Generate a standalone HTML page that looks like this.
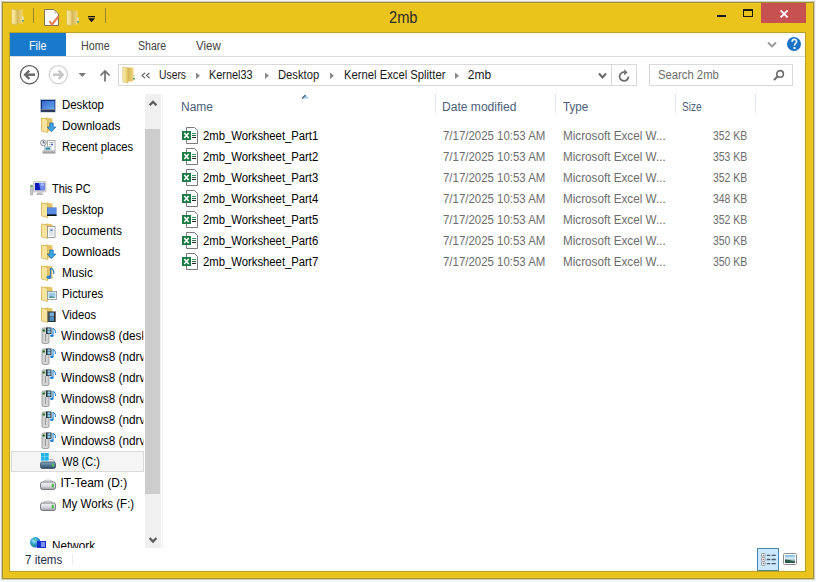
<!DOCTYPE html>
<html><head><meta charset="utf-8"><style>
html,body{margin:0;padding:0;}
body{width:816px;height:582px;overflow:hidden;position:relative;background:#F5F7FB;font-family:"Liberation Sans", sans-serif;}
.b{position:absolute;}
.t{position:absolute;white-space:nowrap;}
</style></head><body>
<div class="b" style="left:2px;top:2px;width:810px;height:575px;border:1px solid #A08F2E;background:#EBC41B;box-shadow:0 0 0 1px rgba(140,130,80,0.35), inset 0 0 0 1px #EEC92C;"></div>
<div class="b" style="left:9px;top:32px;width:795px;height:538px;border:1px solid #BAA12E;background:#fff;box-shadow:inset 1px 1px 0 #FFFFE4, inset -1px -1px 0 #FFFFE4;"></div>
<div class="b" style="left:10px;top:33px;width:795px;height:3px;background:linear-gradient(#FDFBE0,#fff);"></div>
<svg class="b" style="left:11px;top:8px;" width="15" height="18" viewBox="0 0 15 18">
<defs><linearGradient id="fgl11" x1="0" x2="1"><stop offset="0" stop-color="#FFF3B4"/><stop offset="1" stop-color="#E4C664"/></linearGradient>
<linearGradient id="fgr11" x1="0" x2="1"><stop offset="0" stop-color="#CFB04C"/><stop offset="1" stop-color="#F0D680"/></linearGradient></defs>
<path d="M5 1.5 L11.5 1.5 V15.5 L5 15.5 Z" fill="url(#fgr11)"/>
<path d="M0.8 1 L6 2.2 V17 L0.8 15.8 Z" fill="url(#fgl11)" stroke="#D0B560" stroke-width="0.6"/>
<rect x="11" y="8.5" width="1.8" height="5" fill="#E8E0B0"/><rect x="11" y="12" width="1.8" height="1.6" fill="#5a9a70"/>
</svg>
<div class="b" style="left:33px;top:8px;width:1px;height:15px;background:#9a8530;"></div>
<svg class="b" style="left:44px;top:9px;" width="16" height="17" viewBox="0 0 16 17">
<path d="M0.5 0.5 H10 L14.5 5 V16.5 H0.5 Z" fill="#fdfdfd" stroke="#7c7550" stroke-width="1"/>
<circle cx="11.3" cy="3.3" r="1.2" fill="#ccc"/>
<path d="M5.5 12.2 L8 15.5 L14.5 7.5" fill="none" stroke="#E47B55" stroke-width="2"/>
</svg>
<svg class="b" style="left:66px;top:9px;" width="15" height="18" viewBox="0 0 15 18">
<defs><linearGradient id="fgl66" x1="0" x2="1"><stop offset="0" stop-color="#FFF3B4"/><stop offset="1" stop-color="#E4C664"/></linearGradient>
<linearGradient id="fgr66" x1="0" x2="1"><stop offset="0" stop-color="#CFB04C"/><stop offset="1" stop-color="#F0D680"/></linearGradient></defs>
<path d="M5 1.5 L11.5 1.5 V15.5 L5 15.5 Z" fill="url(#fgr66)"/>
<path d="M0.8 1 L6 2.2 V17 L0.8 15.8 Z" fill="url(#fgl66)" stroke="#D0B560" stroke-width="0.6"/>
<rect x="11" y="8.5" width="1.8" height="5" fill="#E8E0B0"/><rect x="11" y="12" width="1.8" height="1.6" fill="#5a9a70"/>
</svg>
<svg class="b" style="left:87px;top:14px;" width="9" height="9" viewBox="0 0 9 9"><rect x="1" y="2" width="7" height="1.3" fill="#111"/><path d="M1 4.3 H8 L4.5 8.3 Z" fill="#111"/></svg>
<div class="b" style="left:105px;top:8px;width:1px;height:15px;background:#9a8530;"></div>
<div class="t" style="left:389.40px;top:8.46px;font-size:16px;line-height:20px;color:#2b2b2b;transform:scaleX(0.9159);transform-origin:0 0;">2mb</div>
<div class="b" style="left:717px;top:14.7px;width:8.5px;height:2.6px;background:#1a1a1a;"></div>
<div class="b" style="left:743px;top:9px;width:10px;height:8px;border:1px solid #1a1a1a;border-top-width:2px;box-sizing:border-box;"></div>
<div class="b" style="left:761px;top:3px;width:45px;height:20px;background:#C75050;"></div>
<svg class="b" style="left:779px;top:9px;" width="11" height="10" viewBox="0 0 11 10"><path d="M1.6 1.3 L8.6 8.3 M8.6 1.3 L1.6 8.3" stroke="#fff" stroke-width="1.9"/></svg>
<div class="b" style="left:10px;top:33px;width:56px;height:23px;background:#1979CA;"></div>
<div class="t" style="left:29.30px;top:38.24px;font-size:12px;line-height:16px;color:#fff;transform:scaleX(0.9002);transform-origin:0 0;">File</div>
<div class="t" style="left:80.60px;top:38.24px;font-size:12px;line-height:16px;color:#444;transform:scaleX(0.8937);transform-origin:0 0;">Home</div>
<div class="t" style="left:138.20px;top:38.24px;font-size:12px;line-height:16px;color:#444;transform:scaleX(0.8811);transform-origin:0 0;">Share</div>
<div class="t" style="left:196.20px;top:38.24px;font-size:12px;line-height:16px;color:#444;transform:scaleX(0.9607);transform-origin:0 0;">View</div>
<div class="b" style="left:10px;top:56px;width:795px;height:1px;background:#DADBDC;"></div>
<svg class="b" style="left:767px;top:41px;" width="10" height="8" viewBox="0 0 10 8"><path d="M1 1.5 L5 5.5 L9 1.5" fill="none" stroke="#9a9a9a" stroke-width="1.9"/></svg>
<svg class="b" style="left:786px;top:36px;" width="16" height="16" viewBox="0 0 16 16"><circle cx="8" cy="8" r="7" fill="#1C72C6"/><path d="M6 5.9 Q6.1 3.4 8.4 3.4 Q10.6 3.4 10.6 5.6 Q10.6 6.9 9.4 7.7 Q8.5 8.3 8.5 9.8" fill="none" stroke="#E4F6FF" stroke-width="1.6"/><rect x="7.5" y="11" width="2" height="2" fill="#E4F6FF"/></svg>
<svg class="b" style="left:19px;top:64px;" width="22" height="22" viewBox="0 0 22 22"><circle cx="10.5" cy="10.7" r="9.1" fill="none" stroke="#5e5e5e" stroke-width="1.25"/><path d="M6.5 10.7 H16" fill="none" stroke="#6a6a6a" stroke-width="2.5"/><path d="M10.3 6.6 L6 10.7 L10.3 14.8" fill="none" stroke="#6a6a6a" stroke-width="2.3"/></svg>
<svg class="b" style="left:48px;top:64px;" width="22" height="22" viewBox="0 0 22 22"><circle cx="10.3" cy="10.7" r="9.1" fill="none" stroke="#d2d2d2" stroke-width="1.25"/><path d="M5 10.7 H14.5" fill="none" stroke="#c6c6c6" stroke-width="2.5"/><path d="M10.5 6.6 L14.8 10.7 L10.5 14.8" fill="none" stroke="#c6c6c6" stroke-width="2.3"/></svg>
<svg class="b" style="left:78px;top:72px;" width="9" height="6" viewBox="0 0 9 6"><path d="M0.5 1 H8 L4.25 5 Z" fill="#7a7a7a"/></svg>
<svg class="b" style="left:99px;top:69px;" width="12" height="13" viewBox="0 0 12 13"><path d="M6 2 V12.5 M1.5 6.5 L6 2 L10.5 6.5" fill="none" stroke="#6e6e6e" stroke-width="1.7"/></svg>
<div class="b" style="left:118px;top:64px;width:519px;height:22px;border:1px solid #D9D9D9;box-sizing:border-box;"></div>
<div class="b" style="left:611px;top:64px;width:1px;height:22px;background:#D9D9D9;"></div>
<svg class="b" style="left:122px;top:66px;" width="15" height="18" viewBox="0 0 15 18">
<defs><linearGradient id="fgl122" x1="0" x2="1"><stop offset="0" stop-color="#FFF3B4"/><stop offset="1" stop-color="#E4C664"/></linearGradient>
<linearGradient id="fgr122" x1="0" x2="1"><stop offset="0" stop-color="#CFB04C"/><stop offset="1" stop-color="#F0D680"/></linearGradient></defs>
<path d="M5 1.5 L11.5 1.5 V15.5 L5 15.5 Z" fill="url(#fgr122)"/>
<path d="M0.8 1 L6 2.2 V17 L0.8 15.8 Z" fill="url(#fgl122)" stroke="#D0B560" stroke-width="0.6"/>
<rect x="11" y="8.5" width="1.8" height="5" fill="#E8E0B0"/><rect x="11" y="12" width="1.8" height="1.6" fill="#5a9a70"/>
</svg>
<svg class="b" style="left:141px;top:72px;" width="10" height="7" viewBox="0 0 10 7"><path d="M4 0.8 L1 3.5 L4 6.2 M8.5 0.8 L5.5 3.5 L8.5 6.2" fill="none" stroke="#555" stroke-width="1.1"/></svg>
<div class="t" style="left:158.60px;top:66.64px;font-size:12px;line-height:16px;color:#1a1a1a;transform:scaleX(0.8616);transform-origin:0 0;">Users</div>
<svg class="b" style="left:195px;top:72px;" width="6" height="8" viewBox="0 0 6 8"><path d="M1 0.5 L5 3.75 L1 7 Z" fill="#8a8a8a"/></svg>
<div class="t" style="left:209.40px;top:66.64px;font-size:12px;line-height:16px;color:#1a1a1a;transform:scaleX(0.9078);transform-origin:0 0;">Kernel33</div>
<svg class="b" style="left:264px;top:72px;" width="6" height="8" viewBox="0 0 6 8"><path d="M1 0.5 L5 3.75 L1 7 Z" fill="#8a8a8a"/></svg>
<div class="t" style="left:277.50px;top:66.64px;font-size:12px;line-height:16px;color:#1a1a1a;transform:scaleX(0.9358);transform-origin:0 0;">Desktop</div>
<svg class="b" style="left:329px;top:72px;" width="6" height="8" viewBox="0 0 6 8"><path d="M1 0.5 L5 3.75 L1 7 Z" fill="#8a8a8a"/></svg>
<div class="t" style="left:343.50px;top:66.64px;font-size:12px;line-height:16px;color:#1a1a1a;transform:scaleX(0.9384);transform-origin:0 0;">Kernel Excel Splitter</div>
<svg class="b" style="left:454px;top:72px;" width="6" height="8" viewBox="0 0 6 8"><path d="M1 0.5 L5 3.75 L1 7 Z" fill="#8a8a8a"/></svg>
<div class="t" style="left:467.80px;top:66.64px;font-size:12px;line-height:16px;color:#1a1a1a;">2mb</div>
<svg class="b" style="left:597px;top:72px;" width="11" height="8" viewBox="0 0 11 8"><path d="M2 1.5 L5.5 5.5 L9 1.5" fill="none" stroke="#666" stroke-width="2"/></svg>
<svg class="b" style="left:617px;top:68px;" width="14" height="14" viewBox="0 0 14 14"><path d="M11.4 8.6 A4.4 4.4 0 1 1 7.6 4.2" fill="none" stroke="#6e6e6e" stroke-width="1.8"/><path d="M7.2 1.2 L10.6 4.4 L7.2 7.2 Z" fill="#6e6e6e"/></svg>
<div class="b" style="left:649px;top:64px;width:144px;height:22px;border:1px solid #D9D9D9;box-sizing:border-box;"></div>
<div class="t" style="left:658.30px;top:66.64px;font-size:12px;line-height:16px;color:#6d6d6d;transform:scaleX(0.9396);transform-origin:0 0;">Search 2mb</div>
<svg class="b" style="left:771px;top:68px;" width="14" height="14" viewBox="0 0 14 14"><circle cx="9.1" cy="5.9" r="3.3" fill="none" stroke="#6a6a6a" stroke-width="1.6"/><path d="M6.8 8.3 L3 12" stroke="#6a6a6a" stroke-width="1.9"/></svg>
<div class="b" style="left:145px;top:94px;width:16px;height:454px;background:#F0F0F0;"></div>
<div class="b" style="left:145px;top:129px;width:15px;height:365px;background:#CDCDCD;"></div>
<svg class="b" style="left:148px;top:99px;" width="10" height="8" viewBox="0 0 10 8"><path d="M1.6 6.3 L5 2.8 L8.4 6.3" fill="none" stroke="#5a5a5a" stroke-width="2.3"/></svg>
<svg class="b" style="left:148px;top:536px;" width="10" height="8" viewBox="0 0 10 8"><path d="M1.6 2 L5 5.5 L8.4 2" fill="none" stroke="#5a5a5a" stroke-width="2.3"/></svg>
<div class="b" style="left:162px;top:94px;width:1px;height:454px;background:#F2F2F2;"></div>
<div class="b" style="left:11px;top:451px;width:133px;height:21px;background:#F5F5F5;border:1px solid #DADADA;box-sizing:border-box;"></div>
<div class="t" style="left:61.50px;top:96.84px;font-size:12px;line-height:16px;color:#000;transform:scaleX(0.9516);transform-origin:0 0;width:86.17px;overflow:hidden;">Desktop</div>
<svg class="b" style="left:40px;top:98.5px;" width="16" height="14" viewBox="0 0 16 14"><rect x="0" y="0" width="16" height="13.5" fill="#B4BED0"/><rect x="1" y="1" width="14" height="9" fill="#0E2E78"/><defs><linearGradient id="dg" x1="0" y1="0" x2="1" y2="1"><stop offset="0" stop-color="#3464c8"/><stop offset="1" stop-color="#6aaaf2"/></linearGradient></defs><rect x="2" y="2" width="12.5" height="8" fill="url(#dg)"/><rect x="1" y="10.5" width="14" height="2.5" fill="#2E3C5C"/></svg>
<div class="t" style="left:61.50px;top:117.84px;font-size:12px;line-height:16px;color:#000;transform:scaleX(0.9854);transform-origin:0 0;width:83.22px;overflow:hidden;">Downloads</div>
<svg class="b" style="left:41px;top:117px;" width="16" height="16" viewBox="0 0 16 16"><path d="M0.5 1.5 L6 0.5 L11.5 1.5 V13.5 L6 14.5 L0.5 13.5 Z" fill="#E4C466"/><path d="M0.5 0.8 L6.5 2.3 V15.5 L0.5 14 Z" fill="#F6E39C" stroke="#CFAF55" stroke-width="0.7"/><path d="M8.8 6 H12.2 V10 H14.8 L10.5 14.8 L6.2 10 H8.8 Z" fill="#3AA6E8" stroke="#1F5E9E" stroke-width="0.7"/></svg>
<div class="t" style="left:61.50px;top:138.84px;font-size:12px;line-height:16px;color:#000;transform:scaleX(0.9350);transform-origin:0 0;width:87.70px;overflow:hidden;">Recent places</div>
<svg class="b" style="left:40px;top:139px;" width="16" height="16" viewBox="0 0 16 16"><circle cx="3.4" cy="3.8" r="2.9" fill="#E6ECF6" stroke="#8a8a8a" stroke-width="0.9"/><path d="M3.4 2 V4 H4.8" fill="none" stroke="#333" stroke-width="0.8"/><rect x="7.5" y="1.5" width="7.5" height="10" fill="#fff" stroke="#9a9a9a" stroke-width="0.8"/><path d="M9 3.5 H13.5 M9 5.6 H10.5 M9 7.6 H10.5" stroke="#8a96a8" stroke-width="0.7"/><circle cx="12" cy="5.6" r="1" fill="#2a5ab0"/><rect x="4.5" y="7.5" width="6.5" height="4" fill="#DDF0F8" stroke="#9ab0bb" stroke-width="0.6"/><rect x="5.5" y="8.6" width="4.5" height="2" fill="#2f7f98"/><defs><linearGradient id="trg" x1="0" y1="0" x2="0" y2="1"><stop offset="0" stop-color="#d4d4d4"/><stop offset="1" stop-color="#8c8c8c"/></linearGradient></defs><path d="M2.5 11 H15.5 V14.5 H2.5 Z" fill="url(#trg)"/></svg>
<div class="t" style="left:51.80px;top:180.84px;font-size:12px;line-height:16px;color:#000;transform:scaleX(0.9068);transform-origin:0 0;width:101.12px;overflow:hidden;">This PC</div>
<svg class="b" style="left:30px;top:181px;" width="17" height="15" viewBox="0 0 17 15"><rect x="3.5" y="0.5" width="12.5" height="10.5" rx="0.8" fill="#d9dadd" stroke="#b9bbbf" stroke-width="0.7"/><defs><linearGradient id="pcg" x1="0" x2="1"><stop offset="0" stop-color="#0a2ac0"/><stop offset="1" stop-color="#7b9cf0"/></linearGradient></defs><rect x="5" y="2" width="9.5" height="7.2" fill="#0818B8"/><path d="M9 2 H14.5 V9.2 H10.5 Z" fill="#6E8CF0"/><path d="M10.5 2.5 H14 V5 H11 Z" fill="#A8B8F8"/><path d="M7.5 11.5 H12 L13.5 14 H6 Z" fill="#bbb"/><rect x="0" y="4" width="3" height="10" rx="1" fill="#c8c8c8" stroke="#999" stroke-width="0.5"/><rect x="0.6" y="4.5" width="1.8" height="1.5" fill="#4caf3c"/></svg>
<div class="t" style="left:61.70px;top:201.84px;font-size:12px;line-height:16px;color:#000;transform:scaleX(0.9471);transform-origin:0 0;width:86.37px;overflow:hidden;">Desktop</div>
<svg class="b" style="left:41px;top:202px;" width="16" height="16" viewBox="0 0 16 16"><path d="M0.5 1.5 L6 0.5 L11.5 1.5 V13.5 L6 14.5 L0.5 13.5 Z" fill="#E4C466"/><path d="M0.5 0.8 L6.5 2.3 V15.5 L0.5 14 Z" fill="#F6E39C" stroke="#CFAF55" stroke-width="0.7"/><rect x="6" y="5.5" width="9.5" height="8.5" fill="#2e63c4"/><rect x="6.5" y="6" width="8.5" height="6" fill="#5a8de0"/><rect x="6" y="12.5" width="9.5" height="1.5" fill="#111"/></svg>
<div class="t" style="left:61.70px;top:222.84px;font-size:12px;line-height:16px;color:#000;transform:scaleX(0.9886);transform-origin:0 0;width:82.74px;overflow:hidden;">Documents</div>
<svg class="b" style="left:41px;top:223px;" width="16" height="16" viewBox="0 0 16 16"><path d="M0.5 1.5 L6 0.5 L11.5 1.5 V13.5 L6 14.5 L0.5 13.5 Z" fill="#E4C466"/><path d="M0.5 0.8 L6.5 2.3 V15.5 L0.5 14 Z" fill="#F6E39C" stroke="#CFAF55" stroke-width="0.7"/><rect x="6.5" y="3.5" width="7.5" height="11" fill="#fff" stroke="#8a8a8a" stroke-width="0.8"/><path d="M8 6 H12.5 M8 8 H12.5 M8 10 H12.5 M8 12 H12.5" stroke="#a8b0b8" stroke-width="0.7"/><rect x="9.5" y="6.5" width="2" height="1.5" fill="#3a7ad0"/></svg>
<div class="t" style="left:61.50px;top:243.84px;font-size:12px;line-height:16px;color:#000;transform:scaleX(0.9854);transform-origin:0 0;width:83.22px;overflow:hidden;">Downloads</div>
<svg class="b" style="left:41px;top:244px;" width="16" height="16" viewBox="0 0 16 16"><path d="M0.5 1.5 L6 0.5 L11.5 1.5 V13.5 L6 14.5 L0.5 13.5 Z" fill="#E4C466"/><path d="M0.5 0.8 L6.5 2.3 V15.5 L0.5 14 Z" fill="#F6E39C" stroke="#CFAF55" stroke-width="0.7"/><path d="M8.8 6 H12.2 V10 H14.8 L10.5 14.8 L6.2 10 H8.8 Z" fill="#3AA6E8" stroke="#1F5E9E" stroke-width="0.7"/></svg>
<div class="t" style="left:61.70px;top:264.84px;font-size:12px;line-height:16px;color:#000;transform:scaleX(0.9861);transform-origin:0 0;width:82.95px;overflow:hidden;">Music</div>
<svg class="b" style="left:41px;top:265px;" width="16" height="16" viewBox="0 0 16 16"><path d="M0.5 1.5 L6 0.5 L11.5 1.5 V13.5 L6 14.5 L0.5 13.5 Z" fill="#E4C466"/><path d="M0.5 0.8 L6.5 2.3 V15.5 L0.5 14 Z" fill="#F6E39C" stroke="#CFAF55" stroke-width="0.7"/><path d="M9.5 3 V11.5" stroke="#2a7ed0" stroke-width="1.3"/><path d="M9.8 3 Q13.5 5 12.8 9" fill="none" stroke="#2a7ed0" stroke-width="1.2"/><ellipse cx="8" cy="12.3" rx="2.4" ry="1.8" fill="#2a7ed0"/></svg>
<div class="t" style="left:61.70px;top:285.84px;font-size:12px;line-height:16px;color:#000;transform:scaleX(0.9505);transform-origin:0 0;width:86.06px;overflow:hidden;">Pictures</div>
<svg class="b" style="left:41px;top:286px;" width="16" height="16" viewBox="0 0 16 16"><path d="M0.5 1.5 L6 0.5 L11.5 1.5 V13.5 L6 14.5 L0.5 13.5 Z" fill="#E4C466"/><path d="M0.5 0.8 L6.5 2.3 V15.5 L0.5 14 Z" fill="#F6E39C" stroke="#CFAF55" stroke-width="0.7"/><rect x="6.5" y="5.5" width="9" height="8" fill="#fff" stroke="#8a8f98" stroke-width="0.8"/><rect x="7.5" y="6.5" width="7" height="5.5" fill="#9ccbe8"/><path d="M7.5 12 L10 9.5 L14.5 12 Z" fill="#5a9a8a"/></svg>
<div class="t" style="left:61.70px;top:306.84px;font-size:12px;line-height:16px;color:#000;transform:scaleX(0.9322);transform-origin:0 0;width:87.75px;overflow:hidden;">Videos</div>
<svg class="b" style="left:41px;top:307px;" width="16" height="16" viewBox="0 0 16 16"><path d="M0.5 1.5 L6 0.5 L11.5 1.5 V13.5 L6 14.5 L0.5 13.5 Z" fill="#E4C466"/><path d="M0.5 0.8 L6.5 2.3 V15.5 L0.5 14 Z" fill="#F6E39C" stroke="#CFAF55" stroke-width="0.7"/><rect x="6.5" y="4.5" width="8.5" height="10.5" fill="#2a2a2a"/><rect x="8.5" y="5.5" width="4.5" height="4" fill="#7ab0d8"/><rect x="8.5" y="10" width="4.5" height="4" fill="#4a90c0"/><path d="M7 5.5 V14.5 M14.5 5.5 V14.5" stroke="#ddd" stroke-width="0.8" stroke-dasharray="1 1"/></svg>
<div class="t" style="left:61.00px;top:327.84px;font-size:12px;line-height:16px;color:#000;transform:scaleX(0.9806);transform-origin:0 0;width:84.13px;overflow:hidden;">Windows8 (desktop-b)</div>
<svg class="b" style="left:41px;top:327px;" width="16" height="17" viewBox="0 0 16 17"><rect x="1" y="1" width="7" height="15.5" rx="1.5" fill="#d4d4d4" stroke="#8e8e8e" stroke-width="0.8"/><path d="M4.5 7 V14" stroke="#999" stroke-width="1"/><circle cx="2.8" cy="3.5" r="1.2" fill="#2a4a2a" stroke="#7c7" stroke-width="0.5"/><rect x="5" y="0.5" width="5.5" height="6.5" fill="#1f2f3a"/><rect x="6.5" y="1.3" width="3" height="2.3" fill="#8fcbe8"/><rect x="6.5" y="4" width="3" height="2.3" fill="#8fcbe8"/><path d="M12 1 V8.5" stroke="#1f7ed2" stroke-width="1.1"/><path d="M12.2 1 Q14.8 2.5 14.5 6" fill="none" stroke="#1f7ed2" stroke-width="1"/><ellipse cx="10.8" cy="8.8" rx="1.8" ry="1.3" fill="#1f7ed2"/></svg>
<div class="t" style="left:61.00px;top:348.84px;font-size:12px;line-height:16px;color:#000;transform:scaleX(0.9806);transform-origin:0 0;width:84.13px;overflow:hidden;">Windows8 (ndrv)</div>
<svg class="b" style="left:41px;top:348px;" width="16" height="17" viewBox="0 0 16 17"><rect x="1" y="1" width="7" height="15.5" rx="1.5" fill="#d4d4d4" stroke="#8e8e8e" stroke-width="0.8"/><path d="M4.5 7 V14" stroke="#999" stroke-width="1"/><circle cx="2.8" cy="3.5" r="1.2" fill="#2a4a2a" stroke="#7c7" stroke-width="0.5"/><rect x="5" y="0.5" width="5.5" height="6.5" fill="#1f2f3a"/><rect x="6.5" y="1.3" width="3" height="2.3" fill="#8fcbe8"/><rect x="6.5" y="4" width="3" height="2.3" fill="#8fcbe8"/><path d="M12 1 V8.5" stroke="#1f7ed2" stroke-width="1.1"/><path d="M12.2 1 Q14.8 2.5 14.5 6" fill="none" stroke="#1f7ed2" stroke-width="1"/><ellipse cx="10.8" cy="8.8" rx="1.8" ry="1.3" fill="#1f7ed2"/></svg>
<div class="t" style="left:61.00px;top:369.84px;font-size:12px;line-height:16px;color:#000;transform:scaleX(0.9806);transform-origin:0 0;width:84.13px;overflow:hidden;">Windows8 (ndrv)</div>
<svg class="b" style="left:41px;top:369px;" width="16" height="17" viewBox="0 0 16 17"><rect x="1" y="1" width="7" height="15.5" rx="1.5" fill="#d4d4d4" stroke="#8e8e8e" stroke-width="0.8"/><path d="M4.5 7 V14" stroke="#999" stroke-width="1"/><circle cx="2.8" cy="3.5" r="1.2" fill="#2a4a2a" stroke="#7c7" stroke-width="0.5"/><rect x="5" y="0.5" width="5.5" height="6.5" fill="#1f2f3a"/><rect x="6.5" y="1.3" width="3" height="2.3" fill="#8fcbe8"/><rect x="6.5" y="4" width="3" height="2.3" fill="#8fcbe8"/><path d="M12 1 V8.5" stroke="#1f7ed2" stroke-width="1.1"/><path d="M12.2 1 Q14.8 2.5 14.5 6" fill="none" stroke="#1f7ed2" stroke-width="1"/><ellipse cx="10.8" cy="8.8" rx="1.8" ry="1.3" fill="#1f7ed2"/></svg>
<div class="t" style="left:61.00px;top:390.84px;font-size:12px;line-height:16px;color:#000;transform:scaleX(0.9806);transform-origin:0 0;width:84.13px;overflow:hidden;">Windows8 (ndrv)</div>
<svg class="b" style="left:41px;top:390px;" width="16" height="17" viewBox="0 0 16 17"><rect x="1" y="1" width="7" height="15.5" rx="1.5" fill="#d4d4d4" stroke="#8e8e8e" stroke-width="0.8"/><path d="M4.5 7 V14" stroke="#999" stroke-width="1"/><circle cx="2.8" cy="3.5" r="1.2" fill="#2a4a2a" stroke="#7c7" stroke-width="0.5"/><rect x="5" y="0.5" width="5.5" height="6.5" fill="#1f2f3a"/><rect x="6.5" y="1.3" width="3" height="2.3" fill="#8fcbe8"/><rect x="6.5" y="4" width="3" height="2.3" fill="#8fcbe8"/><path d="M12 1 V8.5" stroke="#1f7ed2" stroke-width="1.1"/><path d="M12.2 1 Q14.8 2.5 14.5 6" fill="none" stroke="#1f7ed2" stroke-width="1"/><ellipse cx="10.8" cy="8.8" rx="1.8" ry="1.3" fill="#1f7ed2"/></svg>
<div class="t" style="left:61.00px;top:411.84px;font-size:12px;line-height:16px;color:#000;transform:scaleX(0.9806);transform-origin:0 0;width:84.13px;overflow:hidden;">Windows8 (ndrv)</div>
<svg class="b" style="left:41px;top:411px;" width="16" height="17" viewBox="0 0 16 17"><rect x="1" y="1" width="7" height="15.5" rx="1.5" fill="#d4d4d4" stroke="#8e8e8e" stroke-width="0.8"/><path d="M4.5 7 V14" stroke="#999" stroke-width="1"/><circle cx="2.8" cy="3.5" r="1.2" fill="#2a4a2a" stroke="#7c7" stroke-width="0.5"/><rect x="5" y="0.5" width="5.5" height="6.5" fill="#1f2f3a"/><rect x="6.5" y="1.3" width="3" height="2.3" fill="#8fcbe8"/><rect x="6.5" y="4" width="3" height="2.3" fill="#8fcbe8"/><path d="M12 1 V8.5" stroke="#1f7ed2" stroke-width="1.1"/><path d="M12.2 1 Q14.8 2.5 14.5 6" fill="none" stroke="#1f7ed2" stroke-width="1"/><ellipse cx="10.8" cy="8.8" rx="1.8" ry="1.3" fill="#1f7ed2"/></svg>
<div class="t" style="left:61.00px;top:432.84px;font-size:12px;line-height:16px;color:#000;transform:scaleX(0.9806);transform-origin:0 0;width:84.13px;overflow:hidden;">Windows8 (ndrv)</div>
<svg class="b" style="left:41px;top:432px;" width="16" height="17" viewBox="0 0 16 17"><rect x="1" y="1" width="7" height="15.5" rx="1.5" fill="#d4d4d4" stroke="#8e8e8e" stroke-width="0.8"/><path d="M4.5 7 V14" stroke="#999" stroke-width="1"/><circle cx="2.8" cy="3.5" r="1.2" fill="#2a4a2a" stroke="#7c7" stroke-width="0.5"/><rect x="5" y="0.5" width="5.5" height="6.5" fill="#1f2f3a"/><rect x="6.5" y="1.3" width="3" height="2.3" fill="#8fcbe8"/><rect x="6.5" y="4" width="3" height="2.3" fill="#8fcbe8"/><path d="M12 1 V8.5" stroke="#1f7ed2" stroke-width="1.1"/><path d="M12.2 1 Q14.8 2.5 14.5 6" fill="none" stroke="#1f7ed2" stroke-width="1"/><ellipse cx="10.8" cy="8.8" rx="1.8" ry="1.3" fill="#1f7ed2"/></svg>
<div class="t" style="left:61.50px;top:453.84px;font-size:12px;line-height:16px;color:#000;transform:scaleX(0.9194);transform-origin:0 0;width:89.19px;overflow:hidden;">W8 (C:)</div>
<svg class="b" style="left:40px;top:453px;" width="16" height="16" viewBox="0 0 16 16"><rect x="1" y="0" width="3.7" height="3.7" fill="#1fb4ea"/><rect x="5" y="0" width="3.7" height="3.7" fill="#1fb4ea"/><rect x="1" y="4" width="3.7" height="3.7" fill="#1fb4ea"/><rect x="5" y="4" width="3.7" height="3.7" fill="#1fb4ea"/><path d="M9.5 6.5 H13 L15 9" fill="none" stroke="#9aa0a8" stroke-width="0.8"/><defs><linearGradient id="cg" x1="0" y1="0" x2="0" y2="1"><stop offset="0" stop-color="#7fa8c4"/><stop offset="1" stop-color="#2a4a66"/></linearGradient></defs><rect x="0.5" y="9" width="15" height="6.5" rx="1.8" fill="url(#cg)" stroke="#4a5866" stroke-width="0.9"/><rect x="12" y="10.8" width="1.8" height="3" fill="#52c852"/></svg>
<div class="t" style="left:60.50px;top:474.84px;font-size:12px;line-height:16px;color:#000;width:82.72px;overflow:hidden;">IT-Team (D:)</div>
<svg class="b" style="left:40px;top:479px;" width="16" height="12" viewBox="0 0 16 12"><defs><linearGradient id="dgr" x1="0" y1="0" x2="0" y2="1"><stop offset="0" stop-color="#f4f4f8"/><stop offset="0.55" stop-color="#d8dae0"/><stop offset="1" stop-color="#9a9ca4"/></linearGradient></defs><path d="M3 3 Q4 1 8 1 Q12 1 13 3" fill="#eef0f4" stroke="#a8aab0" stroke-width="0.7"/><rect x="0.5" y="3" width="15" height="7.5" rx="2" fill="url(#dgr)" stroke="#6e7076" stroke-width="0.9"/><rect x="11.8" y="4.8" width="2" height="3.6" fill="#3fb83f"/></svg>
<div class="t" style="left:61.50px;top:495.84px;font-size:12px;line-height:16px;color:#000;transform:scaleX(0.9613);transform-origin:0 0;width:85.30px;overflow:hidden;">My Works (F:)</div>
<svg class="b" style="left:40px;top:500px;" width="16" height="12" viewBox="0 0 16 12"><defs><linearGradient id="dgr" x1="0" y1="0" x2="0" y2="1"><stop offset="0" stop-color="#f4f4f8"/><stop offset="0.55" stop-color="#d8dae0"/><stop offset="1" stop-color="#9a9ca4"/></linearGradient></defs><path d="M3 3 Q4 1 8 1 Q12 1 13 3" fill="#eef0f4" stroke="#a8aab0" stroke-width="0.7"/><rect x="0.5" y="3" width="15" height="7.5" rx="2" fill="url(#dgr)" stroke="#6e7076" stroke-width="0.9"/><rect x="11.8" y="4.8" width="2" height="3.6" fill="#3fb83f"/></svg>
<div class="b" style="left:10px;top:530px;width:135px;height:18px;overflow:hidden"><div class="t" style="left:42.00px;top:7.84px;font-size:12px;line-height:16px;color:#000;transform:scaleX(0.9776);transform-origin:0 0;">Network</div>
<svg class="b" style="left:20px;top:7px;" width="17" height="11" viewBox="0 0 17 11"><defs><radialGradient id="gl" cx="0.4" cy="0.35" r="0.7"><stop offset="0" stop-color="#b0f0ff"/><stop offset="0.5" stop-color="#2a9ad8"/><stop offset="1" stop-color="#1a5ab0"/></radialGradient></defs><circle cx="5.3" cy="5.3" r="5.2" fill="url(#gl)"/><path d="M1 6 Q3 9 5 10 Q3 6 1 6Z M3 1.5 Q6 2 6 4 Q4 4 3 1.5Z" fill="#3cc060"/><rect x="7" y="4" width="9" height="7" fill="#1530c8"/><rect x="11" y="5" width="4" height="5" fill="#7a90f0"/></svg>
</div>
<div class="t" style="left:180.94px;top:98.67px;font-size:12.5px;line-height:16px;color:#4C607A;transform:scaleX(0.9601);transform-origin:0 0;">Name</div>
<svg class="b" style="left:300px;top:93px;" width="11" height="7" viewBox="0 0 11 7"><path d="M2 5.5 L5.5 2 L9 5.5 Z" fill="#9cc8e6"/><path d="M2 5.5 L5.5 2" stroke="#3d5f7e" stroke-width="1.1"/></svg>
<div class="b" style="left:435px;top:94px;width:1px;height:22px;background:linear-gradient(#E0E4EE,#E4E8F0 70%,#F8F9FC);"></div>
<div class="b" style="left:555px;top:94px;width:1px;height:22px;background:linear-gradient(#E0E4EE,#E4E8F0 70%,#F8F9FC);"></div>
<div class="b" style="left:675px;top:94px;width:1px;height:22px;background:linear-gradient(#E0E4EE,#E4E8F0 70%,#F8F9FC);"></div>
<div class="b" style="left:755px;top:94px;width:1px;height:22px;background:linear-gradient(#E0E4EE,#E4E8F0 70%,#F8F9FC);"></div>
<div class="t" style="left:441.84px;top:98.67px;font-size:12.5px;line-height:16px;color:#4C607A;transform:scaleX(0.9649);transform-origin:0 0;">Date modified</div>
<div class="t" style="left:562.70px;top:98.67px;font-size:12.5px;line-height:16px;color:#4C607A;transform:scaleX(0.9319);transform-origin:0 0;">Type</div>
<div class="t" style="left:682.40px;top:98.67px;font-size:12.5px;line-height:16px;color:#4C607A;transform:scaleX(0.8044);transform-origin:0 0;">Size</div>
<svg class="b" style="left:182px;top:127px;" width="17" height="17" viewBox="0 0 17 17"><path d="M4.5 0.5 H12.5 L15.5 3.5 V16.5 H4.5 Z" fill="#fff" stroke="#7a7a7a" stroke-width="1"/>
<rect x="0" y="4" width="9" height="9" fill="#1E7A45"/>
<path d="M2.3 6 L6.7 11 M6.7 6 L2.3 11" stroke="#fff" stroke-width="1.6"/>
<rect x="10" y="6" width="4" height="1" fill="#3a9a60"/><rect x="10" y="8" width="4" height="1" fill="#2a6a45"/><rect x="10" y="10" width="4" height="1" fill="#222"/></svg>
<div class="t" style="left:202.70px;top:127.84px;font-size:12px;line-height:16px;color:#000;transform:scaleX(0.9411);transform-origin:0 0;">2mb_Worksheet_Part1</div>
<div class="t" style="left:442.50px;top:127.84px;font-size:12px;line-height:16px;color:#6d6d6d;transform:scaleX(0.9529);transform-origin:0 0;">7/17/2025 10:53 AM</div>
<div class="t" style="left:562.70px;top:127.84px;font-size:12px;line-height:16px;color:#6d6d6d;transform:scaleX(0.9741);transform-origin:0 0;">Microsoft Excel W...</div>
<div class="t" style="left:713.20px;top:127.84px;font-size:12px;line-height:16px;color:#6d6d6d;transform:scaleX(0.8689);transform-origin:0 0;">352 KB</div>
<svg class="b" style="left:182px;top:148px;" width="17" height="17" viewBox="0 0 17 17"><path d="M4.5 0.5 H12.5 L15.5 3.5 V16.5 H4.5 Z" fill="#fff" stroke="#7a7a7a" stroke-width="1"/>
<rect x="0" y="4" width="9" height="9" fill="#1E7A45"/>
<path d="M2.3 6 L6.7 11 M6.7 6 L2.3 11" stroke="#fff" stroke-width="1.6"/>
<rect x="10" y="6" width="4" height="1" fill="#3a9a60"/><rect x="10" y="8" width="4" height="1" fill="#2a6a45"/><rect x="10" y="10" width="4" height="1" fill="#222"/></svg>
<div class="t" style="left:202.70px;top:148.84px;font-size:12px;line-height:16px;color:#000;transform:scaleX(0.9411);transform-origin:0 0;">2mb_Worksheet_Part2</div>
<div class="t" style="left:442.50px;top:148.84px;font-size:12px;line-height:16px;color:#6d6d6d;transform:scaleX(0.9529);transform-origin:0 0;">7/17/2025 10:53 AM</div>
<div class="t" style="left:562.70px;top:148.84px;font-size:12px;line-height:16px;color:#6d6d6d;transform:scaleX(0.9741);transform-origin:0 0;">Microsoft Excel W...</div>
<div class="t" style="left:713.20px;top:148.84px;font-size:12px;line-height:16px;color:#6d6d6d;transform:scaleX(0.8689);transform-origin:0 0;">353 KB</div>
<svg class="b" style="left:182px;top:169px;" width="17" height="17" viewBox="0 0 17 17"><path d="M4.5 0.5 H12.5 L15.5 3.5 V16.5 H4.5 Z" fill="#fff" stroke="#7a7a7a" stroke-width="1"/>
<rect x="0" y="4" width="9" height="9" fill="#1E7A45"/>
<path d="M2.3 6 L6.7 11 M6.7 6 L2.3 11" stroke="#fff" stroke-width="1.6"/>
<rect x="10" y="6" width="4" height="1" fill="#3a9a60"/><rect x="10" y="8" width="4" height="1" fill="#2a6a45"/><rect x="10" y="10" width="4" height="1" fill="#222"/></svg>
<div class="t" style="left:202.70px;top:169.84px;font-size:12px;line-height:16px;color:#000;transform:scaleX(0.9411);transform-origin:0 0;">2mb_Worksheet_Part3</div>
<div class="t" style="left:442.50px;top:169.84px;font-size:12px;line-height:16px;color:#6d6d6d;transform:scaleX(0.9529);transform-origin:0 0;">7/17/2025 10:53 AM</div>
<div class="t" style="left:562.70px;top:169.84px;font-size:12px;line-height:16px;color:#6d6d6d;transform:scaleX(0.9741);transform-origin:0 0;">Microsoft Excel W...</div>
<div class="t" style="left:713.20px;top:169.84px;font-size:12px;line-height:16px;color:#6d6d6d;transform:scaleX(0.8689);transform-origin:0 0;">352 KB</div>
<svg class="b" style="left:182px;top:190px;" width="17" height="17" viewBox="0 0 17 17"><path d="M4.5 0.5 H12.5 L15.5 3.5 V16.5 H4.5 Z" fill="#fff" stroke="#7a7a7a" stroke-width="1"/>
<rect x="0" y="4" width="9" height="9" fill="#1E7A45"/>
<path d="M2.3 6 L6.7 11 M6.7 6 L2.3 11" stroke="#fff" stroke-width="1.6"/>
<rect x="10" y="6" width="4" height="1" fill="#3a9a60"/><rect x="10" y="8" width="4" height="1" fill="#2a6a45"/><rect x="10" y="10" width="4" height="1" fill="#222"/></svg>
<div class="t" style="left:202.70px;top:190.84px;font-size:12px;line-height:16px;color:#000;transform:scaleX(0.9411);transform-origin:0 0;">2mb_Worksheet_Part4</div>
<div class="t" style="left:442.50px;top:190.84px;font-size:12px;line-height:16px;color:#6d6d6d;transform:scaleX(0.9529);transform-origin:0 0;">7/17/2025 10:53 AM</div>
<div class="t" style="left:562.70px;top:190.84px;font-size:12px;line-height:16px;color:#6d6d6d;transform:scaleX(0.9741);transform-origin:0 0;">Microsoft Excel W...</div>
<div class="t" style="left:713.20px;top:190.84px;font-size:12px;line-height:16px;color:#6d6d6d;transform:scaleX(0.8689);transform-origin:0 0;">348 KB</div>
<svg class="b" style="left:182px;top:211px;" width="17" height="17" viewBox="0 0 17 17"><path d="M4.5 0.5 H12.5 L15.5 3.5 V16.5 H4.5 Z" fill="#fff" stroke="#7a7a7a" stroke-width="1"/>
<rect x="0" y="4" width="9" height="9" fill="#1E7A45"/>
<path d="M2.3 6 L6.7 11 M6.7 6 L2.3 11" stroke="#fff" stroke-width="1.6"/>
<rect x="10" y="6" width="4" height="1" fill="#3a9a60"/><rect x="10" y="8" width="4" height="1" fill="#2a6a45"/><rect x="10" y="10" width="4" height="1" fill="#222"/></svg>
<div class="t" style="left:202.70px;top:211.84px;font-size:12px;line-height:16px;color:#000;transform:scaleX(0.9411);transform-origin:0 0;">2mb_Worksheet_Part5</div>
<div class="t" style="left:442.50px;top:211.84px;font-size:12px;line-height:16px;color:#6d6d6d;transform:scaleX(0.9529);transform-origin:0 0;">7/17/2025 10:53 AM</div>
<div class="t" style="left:562.70px;top:211.84px;font-size:12px;line-height:16px;color:#6d6d6d;transform:scaleX(0.9741);transform-origin:0 0;">Microsoft Excel W...</div>
<div class="t" style="left:713.20px;top:211.84px;font-size:12px;line-height:16px;color:#6d6d6d;transform:scaleX(0.8689);transform-origin:0 0;">352 KB</div>
<svg class="b" style="left:182px;top:232px;" width="17" height="17" viewBox="0 0 17 17"><path d="M4.5 0.5 H12.5 L15.5 3.5 V16.5 H4.5 Z" fill="#fff" stroke="#7a7a7a" stroke-width="1"/>
<rect x="0" y="4" width="9" height="9" fill="#1E7A45"/>
<path d="M2.3 6 L6.7 11 M6.7 6 L2.3 11" stroke="#fff" stroke-width="1.6"/>
<rect x="10" y="6" width="4" height="1" fill="#3a9a60"/><rect x="10" y="8" width="4" height="1" fill="#2a6a45"/><rect x="10" y="10" width="4" height="1" fill="#222"/></svg>
<div class="t" style="left:202.70px;top:232.84px;font-size:12px;line-height:16px;color:#000;transform:scaleX(0.9411);transform-origin:0 0;">2mb_Worksheet_Part6</div>
<div class="t" style="left:442.50px;top:232.84px;font-size:12px;line-height:16px;color:#6d6d6d;transform:scaleX(0.9529);transform-origin:0 0;">7/17/2025 10:53 AM</div>
<div class="t" style="left:562.70px;top:232.84px;font-size:12px;line-height:16px;color:#6d6d6d;transform:scaleX(0.9741);transform-origin:0 0;">Microsoft Excel W...</div>
<div class="t" style="left:713.20px;top:232.84px;font-size:12px;line-height:16px;color:#6d6d6d;transform:scaleX(0.8689);transform-origin:0 0;">350 KB</div>
<svg class="b" style="left:182px;top:253px;" width="17" height="17" viewBox="0 0 17 17"><path d="M4.5 0.5 H12.5 L15.5 3.5 V16.5 H4.5 Z" fill="#fff" stroke="#7a7a7a" stroke-width="1"/>
<rect x="0" y="4" width="9" height="9" fill="#1E7A45"/>
<path d="M2.3 6 L6.7 11 M6.7 6 L2.3 11" stroke="#fff" stroke-width="1.6"/>
<rect x="10" y="6" width="4" height="1" fill="#3a9a60"/><rect x="10" y="8" width="4" height="1" fill="#2a6a45"/><rect x="10" y="10" width="4" height="1" fill="#222"/></svg>
<div class="t" style="left:202.70px;top:253.84px;font-size:12px;line-height:16px;color:#000;transform:scaleX(0.9411);transform-origin:0 0;">2mb_Worksheet_Part7</div>
<div class="t" style="left:442.50px;top:253.84px;font-size:12px;line-height:16px;color:#6d6d6d;transform:scaleX(0.9529);transform-origin:0 0;">7/17/2025 10:53 AM</div>
<div class="t" style="left:562.70px;top:253.84px;font-size:12px;line-height:16px;color:#6d6d6d;transform:scaleX(0.9741);transform-origin:0 0;">Microsoft Excel W...</div>
<div class="t" style="left:713.20px;top:253.84px;font-size:12px;line-height:16px;color:#6d6d6d;transform:scaleX(0.8689);transform-origin:0 0;">350 KB</div>
<div class="t" style="left:24.50px;top:551.54px;font-size:12px;line-height:16px;color:#1D2B4C;transform:scaleX(0.9644);transform-origin:0 0;">7 items</div>
<div class="b" style="left:72px;top:554px;width:1px;height:11px;background:#EDEDED;"></div>
<div class="b" style="left:757px;top:548px;width:22px;height:23px;background:#CCE8FF;border:1px solid #4A86B0;border-bottom-color:#5a8a70;box-sizing:border-box;"></div>
<svg class="b" style="left:760px;top:552px;" width="18" height="15" viewBox="0 0 18 15"><rect x="1.5" y="1.5" width="3.5" height="3.5" rx="0.6" fill="#fff" stroke="#8a8a8a" stroke-width="0.8"/><rect x="1.5" y="5.7" width="3.5" height="3.5" rx="0.6" fill="#fff" stroke="#8a8a8a" stroke-width="0.8"/><rect x="1.5" y="9.9" width="3.5" height="3.5" rx="0.6" fill="#fff" stroke="#8a8a8a" stroke-width="0.8"/><rect x="2.8" y="2.8" width="1" height="1" fill="#333"/><rect x="2.8" y="7" width="1" height="1" fill="#a03030"/><rect x="2.8" y="11.2" width="1" height="1" fill="#333"/><path d="M6.8 3.3 H10.3 M11.6 3.3 H15.8 M6.8 7.5 H10.3 M11.6 7.5 H15.8 M6.8 11.7 H10.3 M11.6 11.7 H15.8" stroke="#4d5a66" stroke-width="1.3"/></svg>
<svg class="b" style="left:783px;top:553px;" width="14" height="12" viewBox="0 0 14 12"><defs><linearGradient id="pg" x1="0" y1="0" x2="0" y2="1"><stop offset="0" stop-color="#7ab8e0"/><stop offset="0.45" stop-color="#d8eef6"/><stop offset="1" stop-color="#1f4a3e"/></linearGradient></defs><rect x="0.5" y="0.5" width="13" height="11" rx="1.2" fill="#fff" stroke="#8a8f98"/><rect x="2" y="2" width="10" height="8" fill="url(#pg)"/><path d="M2 6.5 Q6 6 12 9 V10 H2 Z" fill="#2a5a4a"/></svg>

</body></html>
